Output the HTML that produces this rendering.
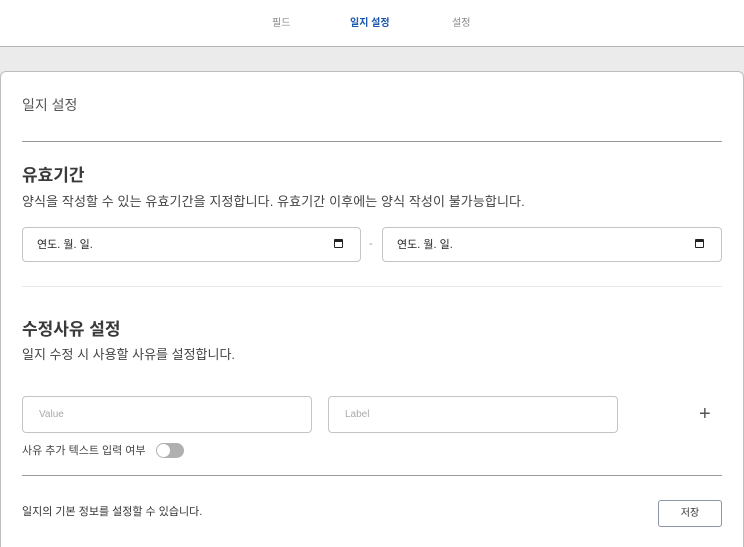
<!DOCTYPE html>
<html><head><meta charset="utf-8"><style>
*{margin:0;padding:0;box-sizing:border-box}
html,body{width:744px;height:547px;overflow:hidden}
body{background:#fff;font-family:"Liberation Sans","Noto Sans CJK KR",sans-serif;position:relative;color:#333}
.a{position:absolute;white-space:nowrap}
.inp{position:absolute;border:1px solid #c4c4c4;border-radius:4px;background:#fff}
</style></head><body>
<div class="a" style="left:272px;top:14px;font-size:10px;color:#888">필드</div>
<div class="a" style="left:350px;top:14px;font-size:10px;color:#1a56b0;font-weight:bold">일지 설정</div>
<div class="a" style="left:452px;top:14px;font-size:10px;color:#888">설정</div>
<div class="a" style="left:0;top:46px;width:744px;height:1px;background:#b4b4b4"></div>
<div class="a" style="left:0;top:47px;width:744px;height:30px;background:#ebebeb"></div>
<div class="a" style="left:0;top:71px;width:744px;height:476px;background:#fff;border:1px solid #bdbdbd;border-bottom:none;border-radius:6px 6px 0 0"></div>
<div class="a" style="left:22px;top:95px;font-size:14px;color:#555">일지 설정</div>
<div class="a" style="left:22px;top:141px;width:700px;height:1px;background:#999"></div>
<div class="a" style="left:22px;top:161px;font-size:17px;font-weight:bold;color:#3a3a3a">유효기간</div>
<div class="a" style="left:22px;top:191px;font-size:13px;color:#444;letter-spacing:0.1px">양식을 작성할 수 있는 유효기간을 지정합니다. 유효기간 이후에는 양식 작성이 불가능합니다.</div>
<div class="inp" style="left:22px;top:227px;width:339px;height:35px"></div>
<div class="a" style="left:37px;top:236px;font-size:11px;color:#222">연도. 월. 일.</div>
<div class="a" style="left:334px;top:239px;width:9px;height:9px;border:1.5px solid #222;border-top-width:3px;border-radius:1px"></div>
<div class="a" style="left:369px;top:238px;font-size:11px;color:#999">-</div>
<div class="inp" style="left:382px;top:227px;width:340px;height:35px"></div>
<div class="a" style="left:397px;top:236px;font-size:11px;color:#222">연도. 월. 일.</div>
<div class="a" style="left:695px;top:239px;width:9px;height:9px;border:1.5px solid #222;border-top-width:3px;border-radius:1px"></div>
<div class="a" style="left:22px;top:286px;width:700px;height:1px;background:#e8e8e8"></div>
<div class="a" style="left:22px;top:315px;font-size:17px;font-weight:bold;color:#3a3a3a">수정사유 설정</div>
<div class="a" style="left:22px;top:344px;font-size:13px;color:#444">일지 수정 시 사용할 사유를 설정합니다.</div>
<div class="inp" style="left:22px;top:396px;width:290px;height:37px"></div>
<div class="a" style="left:39px;top:409px;font-size:10px;color:#aaa">Value</div>
<div class="inp" style="left:328px;top:396px;width:290px;height:37px"></div>
<div class="a" style="left:345px;top:409px;font-size:10px;color:#aaa">Label</div>
<div class="a" style="left:699px;top:403px;font-size:20px;color:#555;font-weight:300">+</div>
<div class="a" style="left:22px;top:442px;font-size:11px;color:#444">사유 추가 텍스트 입력 여부</div>
<div class="a" style="left:156px;top:443px;width:28px;height:15px;border-radius:8px;background:#b0b0b0"></div>
<div class="a" style="left:157px;top:444px;width:13px;height:13px;border-radius:50%;background:#fff"></div>
<div class="a" style="left:22px;top:475px;width:700px;height:1px;background:#999"></div>
<div class="a" style="left:22px;top:503px;font-size:11px;color:#333">일지의 기본 정보를 설정할 수 있습니다.</div>
<div class="a" style="left:658px;top:500px;width:64px;height:27px;border:1px solid #8a96a8;border-radius:3px;font-size:10px;text-align:center;line-height:25px;color:#333">저장</div>
</body></html>
